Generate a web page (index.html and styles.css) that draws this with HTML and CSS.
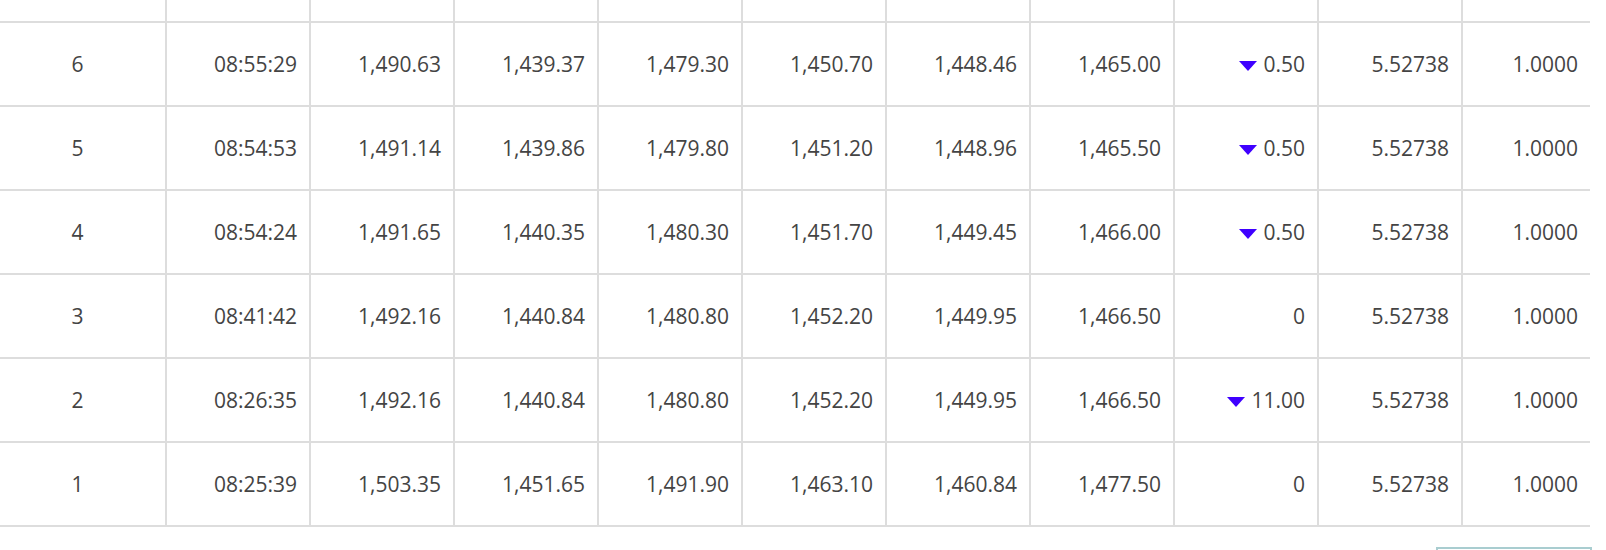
FILE: index.html
```html
<!DOCTYPE html>
<html lang="ko">
<head>
<meta charset="utf-8">
<link rel="stylesheet" href="styles.css">
</head>
<body>
<div class="page">
  <div class="grid">
    <div class="row row-cut">
      <div class="cell c-no"></div><div class="cell"></div><div class="cell"></div><div class="cell"></div><div class="cell"></div><div class="cell"></div><div class="cell"></div><div class="cell"></div><div class="cell"></div><div class="cell"></div><div class="cell last"></div>
    </div>
    <div class="row">
      <div class="cell c-no">6</div><div class="cell">08:55:29</div><div class="cell">1,490.63</div><div class="cell">1,439.37</div><div class="cell">1,479.30</div><div class="cell">1,450.70</div><div class="cell">1,448.46</div><div class="cell">1,465.00</div><div class="cell"><span class="down"></span>0.50</div><div class="cell">5.52738</div><div class="cell last">1.0000</div>
    </div>
    <div class="row">
      <div class="cell c-no">5</div><div class="cell">08:54:53</div><div class="cell">1,491.14</div><div class="cell">1,439.86</div><div class="cell">1,479.80</div><div class="cell">1,451.20</div><div class="cell">1,448.96</div><div class="cell">1,465.50</div><div class="cell"><span class="down"></span>0.50</div><div class="cell">5.52738</div><div class="cell last">1.0000</div>
    </div>
    <div class="row">
      <div class="cell c-no">4</div><div class="cell">08:54:24</div><div class="cell">1,491.65</div><div class="cell">1,440.35</div><div class="cell">1,480.30</div><div class="cell">1,451.70</div><div class="cell">1,449.45</div><div class="cell">1,466.00</div><div class="cell"><span class="down"></span>0.50</div><div class="cell">5.52738</div><div class="cell last">1.0000</div>
    </div>
    <div class="row">
      <div class="cell c-no">3</div><div class="cell">08:41:42</div><div class="cell">1,492.16</div><div class="cell">1,440.84</div><div class="cell">1,480.80</div><div class="cell">1,452.20</div><div class="cell">1,449.95</div><div class="cell">1,466.50</div><div class="cell">0</div><div class="cell">5.52738</div><div class="cell last">1.0000</div>
    </div>
    <div class="row">
      <div class="cell c-no">2</div><div class="cell">08:26:35</div><div class="cell">1,492.16</div><div class="cell">1,440.84</div><div class="cell">1,480.80</div><div class="cell">1,452.20</div><div class="cell">1,449.95</div><div class="cell">1,466.50</div><div class="cell"><span class="down"></span>11.00</div><div class="cell">5.52738</div><div class="cell last">1.0000</div>
    </div>
    <div class="row">
      <div class="cell c-no">1</div><div class="cell">08:25:39</div><div class="cell">1,503.35</div><div class="cell">1,451.65</div><div class="cell">1,491.90</div><div class="cell">1,463.10</div><div class="cell">1,460.84</div><div class="cell">1,477.50</div><div class="cell">0</div><div class="cell">5.52738</div><div class="cell last">1.0000</div>
    </div>
  </div>
  <div class="footer">
    <button class="more" type="button"></button>
  </div>
</div>
</body>
</html>
```
FILE: styles.css
```css
html, body {
  margin: 0;
  padding: 0;
  background: #ffffff;
  overflow: hidden;
}
.page {
  width: 1590px;
  margin-top: -61px;
  font-family: "Open Sans", "Noto Sans", sans-serif;
  font-size: 21px;
  color: #444444;
}
.grid {
  display: flex;
  flex-direction: column;
}
.row {
  display: grid;
  grid-template-columns: 167px repeat(9, 144px) 127px;
  height: 84px;
  border-bottom: 2px solid #dddddd;
  box-sizing: border-box;
}
.cell {
  display: flex;
  align-items: center;
  justify-content: flex-end;
  padding-right: 12px;
  border-right: 2px solid #dddddd;
  box-sizing: border-box;
  line-height: 1;
  white-space: nowrap;
}
.cell.last {
  border-right: none;
}
.c-no {
  justify-content: center;
  padding-right: 10px;
}
.down {
  display: inline-block;
  width: 0;
  height: 0;
  border-left: 9px solid transparent;
  border-right: 9px solid transparent;
  border-top: 10px solid #3f00ff;
  margin-right: 6px;
  margin-top: 3px;
}
.footer {
  display: flex;
  justify-content: flex-end;
  padding-top: 20px;
  margin-right: -2px;
}
.more {
  width: 156px;
  height: 40px;
  border: 2px solid #a9cdd0;
  background: #ffffff;
  padding: 0;
}
```
